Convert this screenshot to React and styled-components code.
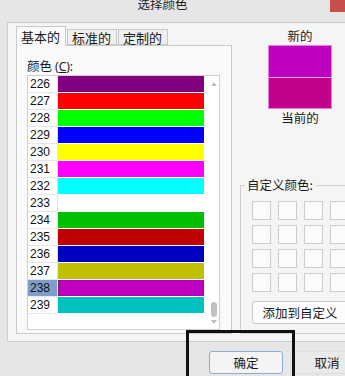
import React from "react";
import styled, { createGlobalStyle } from "styled-components";

const Global = createGlobalStyle`
  html, body { margin: 0; padding: 0; }
  body { width: 345px; height: 376px; overflow: hidden; background: #e6e6e6; }
  * { box-sizing: border-box; }
`;

const CJK = `"Noto Sans CJK SC", "Noto Sans", sans-serif`;
const NUM = `"Liberation Sans", "Noto Sans", sans-serif`;

const Window = styled.div`
  position: relative;
  width: 345px;
  height: 376px;
  overflow: hidden;
  background: #e6e6e6;
  display: flex;
  flex-direction: column;
  font-family: ${CJK};
  color: #1a1a1a;
`;

const TitleBar = styled.div`
  height: 22px;
  flex: none;
  display: flex;
  justify-content: center;
  align-items: flex-start;
  padding-right: 20px;
`;

const Title = styled.div`
  font-size: 12.5px;
  line-height: 12px;
  margin-top: -2px;
  color: #222;
`;

const CloseBtn = styled.div`
  position: absolute;
  top: 0;
  left: 330px;
  width: 45px;
  height: 12px;
  background: #c94f4f;
`;

const Panel = styled.div`
  margin-left: 7px;
  width: 360px;
  height: 320px;
  flex: none;
  background: #f5f5f5;
  border: 1px solid #cdcdcd;
  border-right: none;
  padding: 3px 0 7px 8px;
  display: flex;
`;

const LeftCol = styled.div`
  width: 216px;
  display: flex;
  flex-direction: column;
`;

const TabRow = styled.div`
  height: 19px;
  display: flex;
  align-items: flex-end;
  position: relative;
  z-index: 1;
`;

const Tab = styled.div`
  width: ${(p) => p.$w}px;
  height: ${(p) => (p.$active ? 20 : 16)}px;
  margin-bottom: ${(p) => (p.$active ? -1 : 0)}px;
  margin-left: ${(p) => (p.$first ? 0 : 1)}px;
  background: ${(p) => (p.$active ? "#f9f9f9" : "#efefef")};
  border: 1px solid #c9c9c9;
  border-bottom: ${(p) => (p.$active ? "none" : "1px solid #c9c9c9")};
  font-size: 13px;
  line-height: ${(p) => (p.$active ? 19 : 15)}px;
  padding-left: ${(p) => (p.$active ? 4 : 4)}px;
  white-space: nowrap;
  color: #1a1a1a;
`;

const TabPanel = styled.div`
  flex: 1;
  background: #f9f9f9;
  border: 1px solid #c9c9c9;
  padding: 11px 11px 3px 10px;
  display: flex;
  flex-direction: column;
`;

const FieldLabel = styled.div`
  font-size: 12.5px;
  line-height: 18px;
  height: 18px;
  margin-left: 0;
  u { text-decoration: underline; }
`;

const LabelLatin = styled.span`
  font-family: "Noto Sans", sans-serif;
  font-size: 12px;
  margin-left: 3px;
`;

const ListBox = styled.div`
  width: 193px;
  flex: 1;
  background: #ffffff;
  border: 1px solid #cfcfcf;
  display: flex;
`;

const Rows = styled.div`
  width: 177px;
  display: flex;
  flex-direction: column;
`;

const Row = styled.div`
  height: 17px;
  display: flex;
`;

const NumCell = styled.div`
  width: 30px;
  height: 17px;
  flex: none;
  border-right: 1px solid #e2e2e2;
  border-bottom: 1px solid #e6e6e6;
  background: ${(p) => (p.$sel ? "#7f9fc8" : "#ffffff")};
  font-family: ${NUM};
  font-size: 12px;
  line-height: 16px;
  padding-left: 2px;
  color: #111;
`;

const Swatch = styled.div`
  width: 146px;
  height: 16px;
  margin-top: 0;
  background: ${(p) => p.$c};
  border: ${(p) => (p.$sel ? "1px dotted #3a3a3a" : "none")};
`;

const ScrollBar = styled.div`
  width: 14px;
  display: flex;
  flex-direction: column;
  align-items: center;
  padding: 6px 0 5px 3px;
`;

const Arrow = styled.div`
  width: 0;
  height: 0;
  border-left: 3.5px solid transparent;
  border-right: 3.5px solid transparent;
  ${(p) =>
    p.$up
      ? "border-bottom: 4px solid #bcbcbc;"
      : "border-top: 4px solid #bcbcbc;"}
`;

const Track = styled.div`
  flex: 1;
  display: flex;
  flex-direction: column;
  justify-content: flex-end;
  padding-bottom: 3px;
`;

const Thumb = styled.div`
  width: 6px;
  height: 15px;
  border-radius: 3px;
  background: #c2c2c2;
`;

const RightCol = styled.div`
  flex: 1;
  display: flex;
  flex-direction: column;
  padding-left: 36px;
`;

const PreviewLabel = styled.div`
  width: 64px;
  text-align: center;
  font-size: 12.5px;
  line-height: ${(p) => p.$h}px;
  height: ${(p) => p.$h}px;
`;

const Preview = styled.div`
  width: 64px;
  height: 64px;
  border: 1px solid #e27fe0;
  display: flex;
  flex-direction: column;
`;

const PreviewHalf = styled.div`
  flex: 1;
  background: ${(p) => p.$c};
  border-top: ${(p) => (p.$divider ? "1px solid #e7a6e6" : "none")};
`;

const Group = styled.fieldset`
  margin: 50px 0 0 -28px;
  width: 130px;
  flex: 1;
  border: 1px solid #d0d0d0;
  border-right: none;
  padding: 7px 0 0 11px;
  min-width: 0;
`;

const Legend = styled.legend`
  font-size: 12.5px;
  line-height: 18px;
  padding: 0 3px 0 2px;
  margin-left: -7px;
  color: #1a1a1a;
`;

const Grid = styled.div`
  display: grid;
  grid-template-columns: repeat(5, 19px);
  grid-auto-rows: 19px;
  column-gap: 7px;
  row-gap: 5px;
`;

const Cell = styled.div`
  background: #fbfbfb;
  border: 1px solid #cdcdcd;
`;

const Button = styled.div`
  width: ${(p) => p.$w}px;
  height: 23px;
  flex: none;
  border: 1px solid ${(p) => p.$border || "#c8c8c8"};
  border-radius: 3px;
  background: ${(p) => p.$bg || "#fcfcfc"};
  font-size: 12.5px;
  line-height: 21px;
  text-align: center;
  color: #1a1a1a;
  white-space: nowrap;
`;

const AddButton = styled(Button)`
  margin-top: 9px;
`;

const Footer = styled.div`
  flex: 1;
  display: flex;
  gap: 7px;
  padding: 9px 0 0 209px;
`;

const Annotation = styled.div`
  position: absolute;
  left: 186px;
  top: 330px;
  width: 109px;
  height: 60px;
  border: 3px solid #111;
  pointer-events: none;
`;

const colors = [
  [226, "#800080"],
  [227, "#ff0000"],
  [228, "#00ff00"],
  [229, "#0000ff"],
  [230, "#ffff00"],
  [231, "#ff00ff"],
  [232, "#00ffff"],
  [233, "#ffffff"],
  [234, "#00c000"],
  [235, "#c00000"],
  [236, "#0000c0"],
  [237, "#c0c000"],
  [238, "#c000c0"],
  [239, "#00c0c0"],
];

export default function App() {
  return (
    <>
      <Global />
      <Window>
        <TitleBar>
          <Title>选择颜色</Title>
        </TitleBar>
        <CloseBtn />
        <Panel>
          <LeftCol>
            <TabRow>
              <Tab $active $first $w={50}>基本的</Tab>
              <Tab $w={50}>标准的</Tab>
              <Tab $w={50}>定制的</Tab>
            </TabRow>
            <TabPanel>
              <FieldLabel>
                颜色
                <LabelLatin>
                  (<u>C</u>):
                </LabelLatin>
              </FieldLabel>
              <ListBox>
                <Rows>
                  {colors.map(([n, c]) => (
                    <Row key={n}>
                      <NumCell $sel={n === 238}>{n}</NumCell>
                      <Swatch $c={c} $sel={n === 238} />
                    </Row>
                  ))}
                </Rows>
                <ScrollBar>
                  <Arrow $up />
                  <Track>
                    <Thumb />
                  </Track>
                  <Arrow />
                </ScrollBar>
              </ListBox>
            </TabPanel>
          </LeftCol>
          <RightCol>
            <PreviewLabel $h={19}>新的</PreviewLabel>
            <Preview>
              <PreviewHalf $c="#bf00bf" />
              <PreviewHalf $c="#c2008c" $divider />
            </Preview>
            <PreviewLabel $h={17}>当前的</PreviewLabel>
            <Group>
              <Legend>自定义颜色:</Legend>
              <Grid>
                {Array.from({ length: 20 }).map((_, i) => (
                  <Cell key={i} />
                ))}
              </Grid>
              <AddButton $w={96}>添加到自定义</AddButton>
            </Group>
          </RightCol>
        </Panel>
        <Footer>
          <Button $w={74} $border="#8aaed8" $bg="#f4f4f4">确定</Button>
          <Button $w={74} $border="#e0e0e0" $bg="#e9e9e9">取消</Button>
        </Footer>
        <Annotation />
      </Window>
    </>
  );
}
